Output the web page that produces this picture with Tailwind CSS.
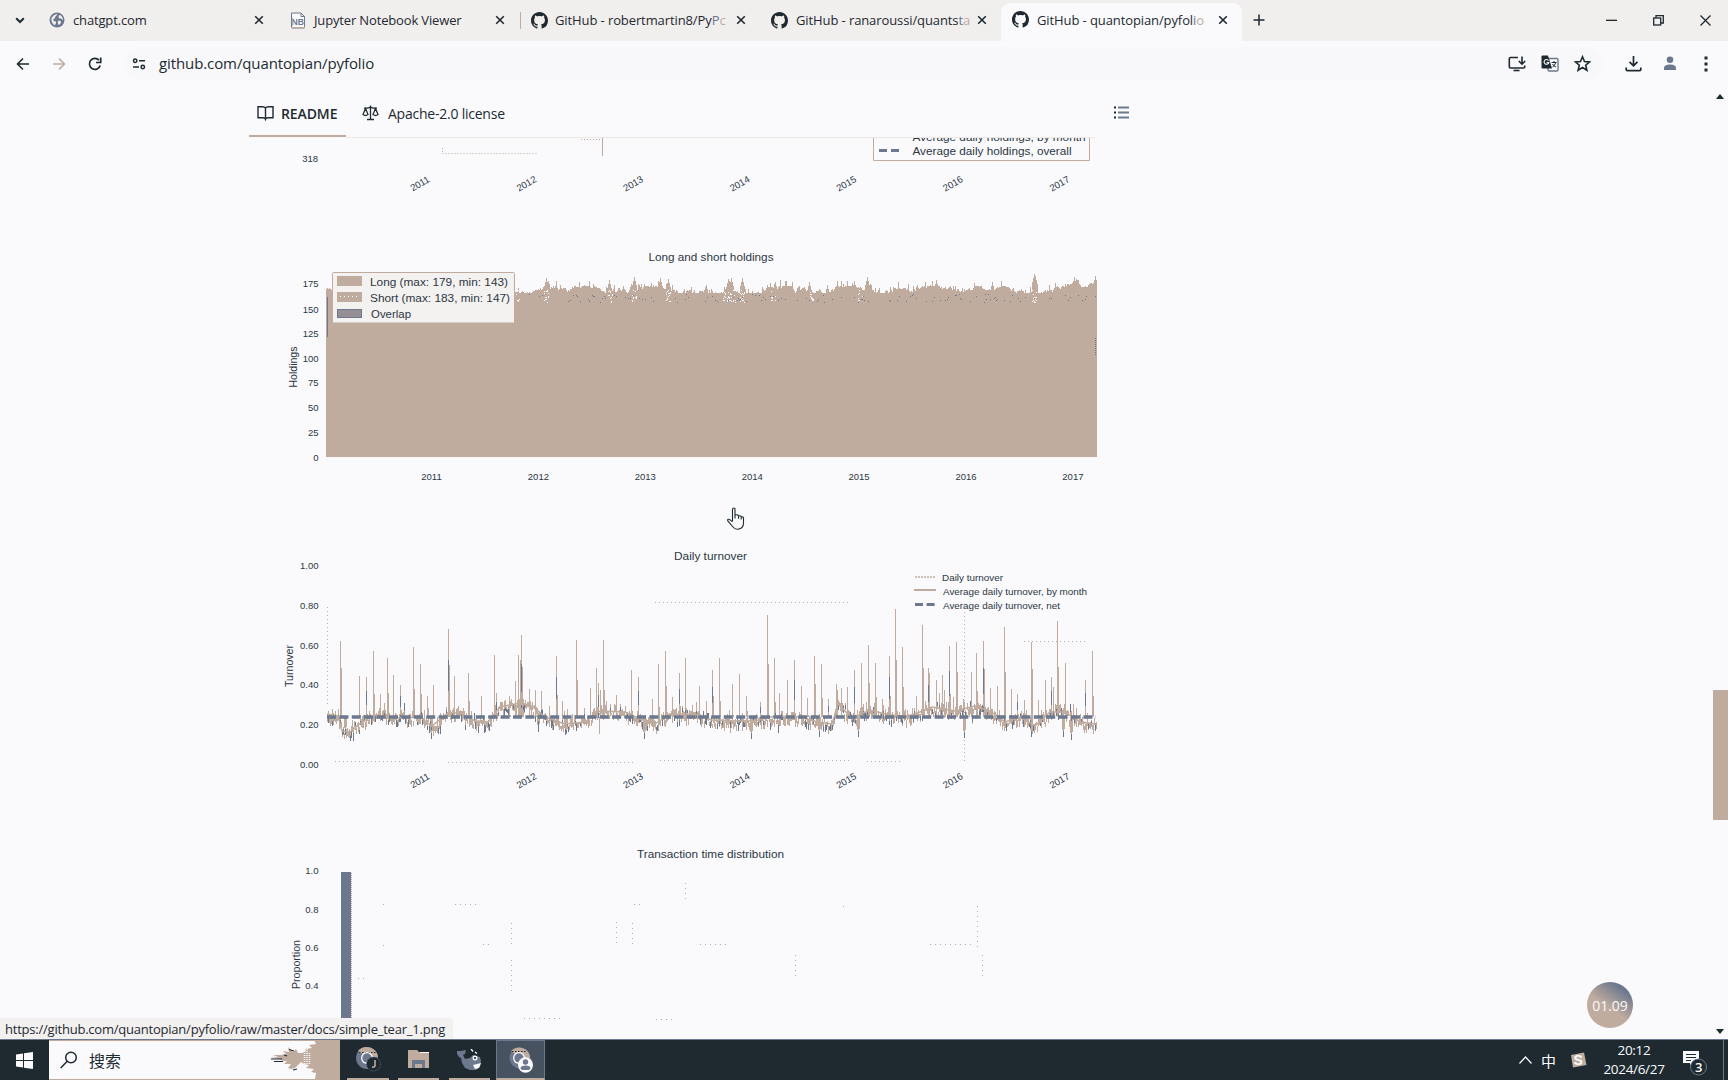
<!DOCTYPE html>
<html lang="en">
<head>
<meta charset="utf-8">
<title>GitHub - quantopian/pyfolio</title>
<script src="https://cdn.jsdelivr.net/npm/@tailwindcss/browser@4"></script>
</head>
<body class="w-[1728px] h-[1080px] overflow-hidden flex flex-col bg-[#fafafd] text-[#1e2a30] font-['Open_Sans','Noto_Sans_CJK_SC',sans-serif]">
<svg class="hidden">
  <symbol id="gh" viewBox="0 0 16 16"><path fill="#1e2a30" d="M8 0C3.58 0 0 3.58 0 8c0 3.54 2.29 6.53 5.47 7.59.4.07.55-.17.55-.38 0-.19-.01-.82-.01-1.49-2.01.37-2.53-.49-2.69-.94-.09-.23-.48-.94-.82-1.13-.28-.15-.68-.52-.01-.53.63-.01 1.08.58 1.23.82.72 1.21 1.87.87 2.33.66.07-.52.28-.87.51-1.07-1.78-.2-3.64-.89-3.64-3.95 0-.87.31-1.59.82-2.15-.08-.2-.36-1.02.08-2.12 0 0 .67-.21 2.2.82.64-.18 1.32-.27 2-.27s1.36.09 2 .27c1.53-1.04 2.2-.82 2.2-.82.44 1.1.16 1.92.08 2.12.51.56.82 1.27.82 2.15 0 3.07-1.87 3.75-3.65 3.95.29.25.54.73.54 1.48 0 1.07-.01 1.93-.01 2.2 0 .21.15.46.55.38A8.01 8.01 0 0 0 16 8c0-4.42-3.58-8-8-8z"/></symbol>
  <symbol id="x" viewBox="0 0 10 10"><path d="M1.2 1.2l7.6 7.6M8.8 1.2L1.2 8.8" stroke="#1e2a30" stroke-width="1.6" fill="none"/></symbol>
</svg>

<!-- tab strip -->
<header class="h-[41px] shrink-0 flex bg-[#f1eeee] text-[13px] pt-[3px]">
  <div class="w-[37px] flex items-center h-[34px] pl-[15px]"><svg width="10" height="7" viewBox="0 0 10 7" fill="none" stroke="#1e2a30" stroke-width="2"><path d="M1.2 1.2L5 5l3.800-3.800"/></svg></div>
  <div class="w-[241px] flex items-center h-[34px] pl-[12px]">
    <svg class="shrink-0" width="16" height="16" viewBox="0 0 16 16"><circle cx="8" cy="8" r="7.500" fill="#6c788e"/><path fill="#f1eeee" d="M2.500 6c2-3 4-4 6-4-1 1-1 2-2 2.500s0 1.500-1 2S4 7 4.500 8.500s2 0 2.500 1.500-1 2-1 3.500C3 12 2 9 2.500 6zM10 3c2 0 4 2 4 5-1 0-1-1.500-2.200-1.500S9.500 6 9.500 5 10.500 4 10 3zM9 9c1.500-.5 3 0 3 1s-1 2.500-2.500 3c-.5-1.500-1-2.500-.5-4z"/></svg>
    <span class="ml-[8px] w-[181px] pt-[2px] whitespace-nowrap tracking-[-0.15px]">chatgpt.com</span>
    <svg class="shrink-0" width="10" height="10"><use href="#x"/></svg>
  </div>
  <div class="w-[241px] flex items-center h-[34px] pl-[12px]">
    <svg class="shrink-0" width="16" height="17" viewBox="0 0 16 17"><path d="M1.500 1h9.500l3.500 3.500V16h-13z" fill="#fafafd" stroke="#6c788e"/><path d="M11 1v3.500h3.500" stroke="#6c788e" fill="none"/><text x="1.500" y="13" font-size="9.500" font-weight="700" fill="#6c788e" font-family="Liberation Sans" textLength="12.500" lengthAdjust="spacingAndGlyphs">NB</text><path d="M1 15.500h14M2.500 6v8" stroke="#bfac9e"/></svg>
    <span class="ml-[8px] w-[181px] pt-[2px] whitespace-nowrap tracking-[-0.15px]">Jupyter Notebook Viewer</span>
    <svg class="shrink-0" width="10" height="10"><use href="#x"/></svg>
  </div>
  <div class="w-[241px] flex items-center h-[34px]">
    <span class="w-px h-[17px] bg-[#bfac9e] ml-[1px]"></span>
    <svg class="shrink-0 ml-[10px]" width="17" height="17"><use href="#gh"/></svg>
    <span class="ml-[7px] w-[181px] pt-[2px] whitespace-nowrap tracking-[-0.1px]">GitHub - robertmartin8/Py<span class="text-[#6c788e]">P</span><span class="text-[#bfac9e]">c</span></span>
    <svg class="shrink-0" width="10" height="10"><use href="#x"/></svg>
  </div>
  <div class="w-[241px] flex items-center h-[34px] pl-[11px]">
    <svg class="shrink-0" width="17" height="17"><use href="#gh"/></svg>
    <span class="ml-[8px] w-[181px] pt-[2px] whitespace-nowrap tracking-[-0.1px]">GitHub - ranaroussi/quants<span class="text-[#6c788e]">t</span><span class="text-[#bfac9e]">a</span></span>
    <svg class="shrink-0" width="10" height="10"><use href="#x"/></svg>
  </div>
  <div class="w-[241px] flex items-start h-[38px] pl-[11px] bg-[#fafafd] rounded-t-[9px]">
    <svg class="shrink-0 mt-[8px]" width="17" height="17"><use href="#gh"/></svg>
    <span class="ml-[8px] mt-[8px] w-[181px] whitespace-nowrap tracking-[-0.1px]">GitHub - quantopian/pyfol<span class="text-[#6c788e]">i</span><span class="text-[#bfac9e]">o</span></span>
    <svg class="shrink-0 mt-[12px]" width="10" height="10"><use href="#x"/></svg>
  </div>
  <div class="flex items-center h-[34px] pl-[11px]"><svg width="12" height="12"><path d="M6 .5v11M.5 6h11" stroke="#1e2a30" stroke-width="1.500"/></svg></div>
  <div class="flex-1 flex items-center justify-end h-[34px] pr-[17px] gap-[36px]">
    <svg width="11" height="11"><path d="M0 5.500h11" stroke="#1e2a30"/><path d="M0 4.500h11" stroke="#bfac9e"/></svg>
    <svg width="11" height="11" fill="none" stroke="#1e2a30" stroke-width="1.300"><rect x=".7" y="3" width="7" height="7"/><path d="M3 3V.7h7.300V8H8"/></svg>
    <svg width="11" height="11"><path d="M.5 .5l10 10M10.500 .5l-10 10" stroke="#1e2a30" stroke-width="1.300"/></svg>
  </div>
</header>

<!-- address row -->
<div class="h-[45px] shrink-0 flex items-center pl-[16px]">
  <svg width="13" height="14" viewBox="0 0 13 14" fill="none" stroke="#1e2a30" stroke-width="1.600"><path d="M13 7H1.500M7 1.500L1.500 7 7 12.500"/></svg>
  <svg class="ml-[24px]" width="13" height="14" viewBox="0 0 13 14" fill="none" stroke="#bfac9e" stroke-width="1.600"><path d="M0 7h11.500M6 1.500L11.500 7 6 12.500"/></svg>
  <svg class="ml-[22px]" width="14" height="14" viewBox="0 0 14 14" fill="none" stroke="#1e2a30" stroke-width="1.700"><path d="M12.200 8.500A5.500 5.500 0 1 1 11 3.200"/><path d="M12.700 .5v5H8" /></svg>
  <div class="ml-[22px] w-[1478px] h-[34px] rounded-full bg-[#f8f8fa] flex items-center pl-[8px]">
    <svg width="14" height="12" viewBox="0 0 14 12" fill="none" stroke="#1e2a30" stroke-width="1.500"><circle cx="3.200" cy="2.800" r="1.700"/><path d="M7 2.800h6M1 9h6"/><circle cx="10.800" cy="9" r="1.700"/></svg>
    <span class="ml-[13px] text-[15px] tracking-[-0.1px]">github.com/quantopian/pyfolio</span>
    <div class="ml-auto flex items-center gap-[15px] pr-[11px]">
      <svg width="18" height="16" viewBox="0 0 18 16" fill="none" stroke="#1e2a30" stroke-width="1.600"><path d="M10 1.500H2.500Q1.300 1.500 1.300 2.500v8.500q0 1 1.200 1h13q1.200 0 1.200-1v-1.500"/><path d="M5.500 14.500h6"/><path d="M14 .5v7.500M10.800 5L14 8.200 17.200 5"/></svg>
      <svg width="18" height="17" viewBox="0 0 18 17"><rect x="7" y="3.500" width="10" height="12.500" rx="1.200" fill="#fafafd" stroke="#6c788e" stroke-width="1.400"/><path d="M0.500 1.500Q.5.500 1.500.5H7l4 13H1.500q-1 0-1-1z" fill="#1e2a30"/><path d="M7.500 5.600A2.400 2.400 0 1 0 7.800 7.500H5.600" fill="none" stroke="#fafafd" stroke-width="1.100"/><path d="M10.500 7.500h5M13 6v1.500M14.800 7.500q-.8 3-3.300 4.500M11.500 9q1 2 3.500 3" fill="none" stroke="#1e2a30"/></svg>
      <svg width="17" height="17" viewBox="0 0 17 17"><path d="M8.500 1.800l2 4.700 5 .4-3.800 3.300 1.200 5-4.400-2.700-4.400 2.700 1.200-5L1.500 6.900l5-.4z" fill="none" stroke="#1e2a30" stroke-width="1.600"/></svg>
    </div>
  </div>
  <svg class="ml-[23px]" width="17" height="17" viewBox="0 0 17 17" fill="none" stroke="#1e2a30" stroke-width="1.700"><path d="M8.500 1v9.500M4.500 6.800l4 4 4-4M1.200 12.500v2q0 1.200 1.200 1.200h12.200q1.200 0 1.200-1.200v-2"/></svg>
  <svg class="ml-[21px]" width="14" height="15" viewBox="0 0 14 15" fill="#6c788e"><circle cx="7" cy="3.700" r="3.300"/><path d="M1 14v-2q0-3.500 6-3.500t6 3.500v2z"/></svg>
  <svg class="ml-[27px]" width="4" height="16" fill="#1e2a30"><rect width="3" height="3" y="0.500" x=".5"/><rect width="3" height="3" y="6.500" x=".5"/><rect width="3" height="3" y="12.500" x=".5"/></svg>
</div>

<!-- page -->
<main class="relative flex-1 min-h-0 flex">
  <div class="ml-[249px] w-[892px] h-full overflow-hidden">
    <div class="h-[52px] flex text-[14px]">
      <div class="w-[97px] h-[51px] border-b-2 border-[#bfac9e] flex items-center pt-[4px] pl-[8px]">
        <svg class="shrink-0" width="17" height="16" viewBox="0 0 17 16" fill="none" stroke="#1e2a30" stroke-width="1.400"><path d="M8.500 3.200Q7.500 1.800 5.500 1.800H1v11h5q2 0 2.500 1.500.5-1.500 2.500-1.500h5v-11h-4.500q-2 0-3 1.400v11"/></svg>
        <span class="ml-[7px] pt-px font-semibold text-[14px] tracking-[-0.1px]">README</span>
      </div>
      <div class="flex items-center pt-[2px] pl-[16px] border-b border-[#ece7e3] w-[749px]">
        <svg width="17" height="16" viewBox="0 0 17 16" fill="none" stroke="#1e2a30" stroke-width="1.300"><path d="M8.500 .5v14M5 14.500h7M2 3.200h3q1.500 0 3.500-1 2 1 3.500 1h3M3.500 3.500L1 9.500q2.500 2 5 0zM13.500 3.500L11 9.500q2.500 2 5 0z"/></svg>
        <span class="ml-[9px] pt-px text-[14px] tracking-[-0.23px]">Apache-2.0 license</span>
        <svg class="ml-auto mr-[-34px]" width="15" height="13" viewBox="0 0 15 13"><path d="M4 1.500h11M4 6.500h11M4 11.500h11" stroke="#6c788e" stroke-width="2"/><path d="M0 1.500h2M0 6.500h2M0 11.500h2" stroke="#1e2a30" stroke-width="2"/></svg>
      </div>
    </div>

    <div class="flex flex-col font-['Liberation_Sans',sans-serif]">
      <!-- daily holdings, lower edge -->
      <svg class="block" width="868" height="92" viewBox="249 138 868 92" fill="#2c3742" font-size="9.500">
        <text x="318" y="161.500" text-anchor="end">318</text>
        <g class="years-tilted" data-y="183"></g>
        <path d="M442.500 153.500h95M442.500 148v5" stroke="#bfac9e" stroke-dasharray="1 2" fill="none"/>
        <path d="M602.500 138v18" stroke="#bfac9e"/><path d="M581 139.500h20" stroke="#bfac9e" stroke-dasharray="1 2"/>
        <path d="M873.500 138v22.500h216V138" fill="none" stroke="#bfac9e"/>
        <path d="M879 150.500h20" stroke="#6c788e" stroke-width="3" stroke-dasharray="8 4"/>
        <text x="912.500" y="140.500" font-size="10" textLength="173" lengthAdjust="spacingAndGlyphs">Average daily holdings, by month</text>
        <text x="912.500" y="154.500" font-size="10" textLength="159" lengthAdjust="spacingAndGlyphs">Average daily holdings, overall</text>
      </svg>
      <!-- long and short holdings -->
      <svg class="block" width="868" height="300" viewBox="249 230 868 300" fill="#2c3742" font-size="9.500">
        <text x="648.500" y="261" font-size="11" textLength="125" lengthAdjust="spacingAndGlyphs">Long and short holdings</text>
        <g class="ylab" data-l="175:283 150:309 125:333.5 100:358 75:382.5 50:407.5 25:432 0:457"></g>
        <text transform="translate(297 367) rotate(-90)" text-anchor="middle" font-size="10.500" textLength="41" lengthAdjust="spacingAndGlyphs">Holdings</text>
        <path id="area" fill="#bfac9e"/>
        <path id="specks" stroke="#6c788e" fill="none"/>
        <path id="holes" stroke="#fafafd" fill="none"/>
        <path d="M327.500 297v40" stroke="#6c788e"/>
        <path d="M1095.500 338v18" stroke="#6c788e" stroke-dasharray="1 1"/>
        <rect x="332.500" y="272.500" width="182" height="50.500" rx="1" fill="#f4f1f1" stroke="#bfac9e"/>
        <rect x="337" y="276" width="25" height="10" fill="#bfac9e"/>
        <rect x="337" y="292" width="25" height="10" fill="#bfac9e"/><path d="M340 296.500h18" stroke="#fafafd" stroke-dasharray="1 3"/>
        <rect x="337.500" y="309.500" width="24" height="8" fill="#958f94" stroke="#6c788e"/>
        <text x="370" y="286" font-size="10.500" textLength="138" lengthAdjust="spacingAndGlyphs">Long (max: 179, min: 143)</text>
        <text x="370" y="301.500" font-size="10.500" textLength="140" lengthAdjust="spacingAndGlyphs">Short (max: 183, min: 147)</text>
        <text x="371" y="318" font-size="10.500" textLength="40" lengthAdjust="spacingAndGlyphs">Overlap</text>
        <g class="years" data-y="480"></g>
      </svg>
      <!-- daily turnover -->
      <svg class="block" width="868" height="300" viewBox="249 530 868 300" fill="#2c3742" font-size="9.500">
        <text x="674" y="560" font-size="11" textLength="73" lengthAdjust="spacingAndGlyphs">Daily turnover</text>
        <g class="ylab" data-l="1.00:565 0.80:605.5 0.60:645 0.40:684.5 0.20:724.5 0.00:764"></g>
        <text transform="translate(293 666) rotate(-90)" text-anchor="middle" font-size="10.500" textLength="42" lengthAdjust="spacingAndGlyphs">Turnover</text>
        <path d="M655 602.500h196M335 761.500h92M448 762.500h186M660 760.500h190M867 761.500h34M327.500 607v100M964.500 612v150M1024 641.500h63" stroke="#bfac9e" stroke-dasharray="1 3" fill="none"/>
        <path id="turn" stroke="#bfac9e" stroke-width="1" fill="none"/>
        <path id="turn2" stroke="#6c788e" stroke-width="1" fill="none"/>
        <path id="month" stroke="#bfac9e" stroke-width="1.500" fill="none"/>
        <path d="M327 717h769" stroke="#6c788e" stroke-width="3.600" stroke-dasharray="9 3.400"/>
        <path d="M915 577h20" stroke="#bfac9e" stroke-width="1.500" stroke-dasharray="2 1"/>
        <path d="M914 590h22" stroke="#bfac9e" stroke-width="2"/>
        <path d="M915 604.500h20" stroke="#6c788e" stroke-width="3" stroke-dasharray="8 3.600"/>
        <text x="942" y="581" font-size="9.500" textLength="61" lengthAdjust="spacingAndGlyphs">Daily turnover</text>
        <text x="943" y="595" font-size="9.500" textLength="144" lengthAdjust="spacingAndGlyphs">Average daily turnover, by month</text>
        <text x="943" y="608.500" font-size="9.500" textLength="117" lengthAdjust="spacingAndGlyphs">Average daily turnover, net</text>
        <g class="years-tilted" data-y="780"></g>
      </svg>
      <!-- transaction time distribution -->
      <svg class="block" width="868" height="209" viewBox="249 830 868 209" fill="#2c3742" font-size="9.500">
        <text x="637" y="858" font-size="11" textLength="147" lengthAdjust="spacingAndGlyphs">Transaction time distribution</text>
        <g class="ylab" data-l="1.0:870.5 0.8:909 0.6:947.5 0.4:985.5"></g>
        <text transform="translate(300 964.500) rotate(-90)" text-anchor="middle" font-size="10.500" textLength="49" lengthAdjust="spacingAndGlyphs">Proportion</text>
        <rect x="341" y="872" width="10" height="146" fill="#6c788e"/><path d="M351.500 873v145" stroke="#bfac9e" stroke-dasharray="1 1"/>
        <path d="M455 904.500h24M511.500 923v22M511.500 960v34M616.500 922v22M632.500 923v22M685.500 883v20M483 944.500h8M700 944.500h30M977.500 906v42M982.500 955v25M930 944.500h45M795.500 955v25M524 1018.500h38M656 1019.500h20M634 904.500h8M358 978.500h10M843.500 906v4M383.500 904v2M383.500 945v2" stroke="#bfac9e" stroke-dasharray="1 4" fill="none"/>
      </svg>
    </div>
  </div>

  <!-- scrollbar -->
  <div class="ml-auto w-[16px] h-full flex flex-col items-center">
    <svg class="mt-[8px] shrink-0" width="8" height="5"><path d="M4 0l4 5H0z" fill="#1e2a30"/></svg>
    <div class="mt-[591px] w-[15px] h-[130px] bg-[#bfac9e] shrink-0"></div>
    <svg class="mt-auto mb-[5px] shrink-0" width="8" height="5"><path d="M4 5l4-5H0z" fill="#1e2a30"/></svg>
  </div>

  <!-- link status -->
  <div class="absolute left-0 bottom-0 w-[453px] h-[21px] bg-[#f3f0f0] rounded-tr-[4px] pl-[5px] pt-[3px] flex items-center text-[13px] whitespace-nowrap tracking-[-0.22px]"><span>https://github.com/quantopian/pyfolio/raw/master/docs/simple_tear_1.png</span></div>

  <!-- recorder bubble -->
  <div class="absolute left-[1587px] top-[896px] w-[46px] h-[46px] rounded-full bg-[linear-gradient(215deg,#6c788e_18%,#bfac9e_55%)] flex items-center justify-center text-[14px] text-[#fafafd]">01.09</div>

  <!-- pointer -->
  <svg class="absolute left-[726px] top-[421px]" width="19" height="24" viewBox="0 0 19 24"><path d="M6.500 14V2.500q0-1.500 1.300-1.500T9 2.500V8q3-.8 3.500.8 2.200-.4 2.700 1 2.300-.4 2.300 1.200v5q0 5.500-5.500 6.200-3 0-4.500-1.700L2 14.200q-1-1.700.5-2 1.500-.2 4 2.800M9 8v3.500M12.500 8.800v3M15.200 9.800v2.700" fill="#fafafd" stroke="#1e2a30" stroke-width="1.100"/></svg>
</main>

<!-- taskbar -->
<footer class="h-[41px] shrink-0 bg-[#1e2a30] border-t border-[#6c788e] flex text-[#fafafd]">
  <div class="w-[49px] flex items-center justify-center"><svg width="17" height="17" viewBox="0 0 17 17" fill="#fafafd"><path d="M0 2.500l7-1v6.500H0zM8 1.300L17 0v8H8zM0 9h7v6.500l-7-1zM8 9h9v8l-9-1.300z"/></svg></div>
  <div class="w-[291px] h-[40px] bg-[#fafafd] border-y border-[#bfac9e] text-[#1e2a30] flex items-center pl-[11px]">
    <svg width="18" height="18" viewBox="0 0 18 18" fill="none" stroke="#1e2a30" stroke-width="1.500"><circle cx="11" cy="6.500" r="5.300"/><path d="M7.200 10.300L.7 17"/></svg>
    <span class="ml-[11px] text-[16px] font-['Noto_Sans_CJK_SC',sans-serif]">搜索</span>
    <svg class="ml-auto" width="71" height="38" viewBox="269 1041 71 38"><path fill="#bfac9e" d="M340 1041v38h-25l1-6-5-1 3-3-8-1 3-3-5-1-3-2-3 3-3 3-4 1-3-1 3-4-7 0 3-3h-4l-3-2-10-1 8-1-5-2h8l5-1-3-3 6 1-1-5 5 5 3-3 2 4h4l4-2-1-2 7-1-3-3 7-1-2-4 5-1-1-3z"/><path d="M271 1059h11M274 1061.500h9M289 1049.500l5 1.500M293 1070l4-1M284 1055l3 1" stroke="#1e2a30" stroke-width="1.200"/><path d="M304.500 1051v17M307 1049v18M309.500 1053v12" stroke="#fafafd" stroke-dasharray="1 1" stroke-width="1.500"/></svg>
  </div>
  <div class="flex pl-[7px]">
    <div class="w-[42px] flex flex-col justify-end items-center border-b-2 border-[#bfac9e]">
      <svg class="mb-[6px]" width="26" height="26" viewBox="0 0 26 26"><circle cx="12" cy="12" r="11" fill="#6c788e"/><path d="M3 5A11.500 11.500 0 0 1 23 11H12z" fill="#bfac9e"/><path d="M4 6.500h17" stroke="#1e2a30" stroke-dasharray="1.500 1.500"/><circle cx="12" cy="12" r="6" fill="#fafafd"/><circle cx="12" cy="12" r="4.700" fill="#6c788e"/><circle cx="18.500" cy="18" r="7" fill="#1e2a30" stroke="#6c788e" stroke-width=".8" stroke-dasharray="1 1"/><path d="M20 14v5.500q0 2-3 1.500" stroke="#bfac9e" stroke-width="1.600" fill="none"/></svg>
    </div>
    <div class="ml-[9px] w-[41px] flex flex-col justify-end items-center border-b-2 border-[#bfac9e]">
      <svg class="mb-[9px]" width="21" height="19" viewBox="0 0 21 19"><path d="M0 0h9l2 2h10v16H0z" fill="#bfac9e"/><path d="M12 2.500h9" stroke="#fafafd"/><path d="M4 18v-8h13v8h-3v-4H7v4z" fill="#6c788e"/></svg>
    </div>
    <div class="ml-[10px] w-[41px] flex flex-col justify-end items-center border-b-2 border-[#bfac9e]">
      <svg class="mb-[7px]" width="26" height="22" viewBox="0 0 26 22"><path d="M0 2l4 0 5-1-1 4-2 1 2 4 5-1 3-3 7 2 1 4-1 6-4 3h-6l-5-2-3-5-1-5-2-1-2-3z" fill="#6c788e"/><path d="M16 16l8-2-2 5-4 1z" fill="#fafafd"/><circle cx="18" cy="9" r="2.500" fill="#fafafd"/><circle cx="18" cy="9" r="1.100" fill="#1e2a30"/><path d="M14 0l2 2.500M18 3l2 1.500" stroke="#fafafd" stroke-width="1.300"/></svg>
    </div>
    <div class="ml-[6px] w-[49px] bg-[#46525f] border border-b-2 border-[#6c788e] border-b-[#bfac9e] flex flex-col justify-end items-center">
      <svg class="mb-[5px]" width="26" height="27" viewBox="0 0 26 27"><circle cx="12" cy="12" r="10.500" fill="#6c788e"/><path d="M3 5A11 11 0 0 1 22 12l-8 2z" fill="#bfac9e"/><path d="M4 5.500h15" stroke="#1e2a30" stroke-dasharray="1.500 1.500"/><circle cx="11" cy="12" r="6" fill="#fafafd"/><circle cx="11" cy="12" r="4.700" fill="#6c788e"/><ellipse cx="17.500" cy="19" rx="7.500" ry="7.700" fill="#fafafd"/><circle cx="17.500" cy="16" r="2.700" fill="#6c788e"/><path d="M12.500 22.500q0-3 5-3t5 3l-1.500 1.500h-7z" fill="#6c788e"/></svg>
    </div>
  </div>
  <div class="ml-auto flex items-center">
    <svg width="13" height="8" fill="none" stroke="#fafafd" stroke-width="1.200"><path d="M.5 7.500l6-6.500 6 6.500"/></svg>
    <span class="ml-[9px] text-[15px] leading-none font-['Noto_Sans_CJK_SC',sans-serif]">中</span>
    <svg class="ml-[14px]" width="17" height="16" viewBox="0 0 17 16"><path d="M1 3l13-2.500L16.500 13 3 15.500z" fill="#bfac9e"/><text x="3.500" y="13" font-size="14" font-weight="700" fill="#fafafd" font-family="Liberation Sans">S</text></svg>
    <div class="ml-[13px] w-[68px] text-center text-[13.5px] leading-[19px] tracking-[-0.3px]">20:12<br>2024/6/27</div>
    <div class="ml-[15px] relative w-[40px] h-[40px]">
      <svg class="absolute left-0 top-0" width="30" height="40" viewBox="0 0 30 40"><path d="M0 11h16v12H9l-2 3v-3H0z" fill="#fafafd"/><path d="M3 14.500h10M3 17.500h10M3 20.500h5" stroke="#1e2a30"/><circle cx="15.500" cy="27" r="8" fill="#1e2a30" stroke="#6c788e"/></svg>
      <span class="absolute left-[12px] top-[18px] text-[13px] leading-[18px] font-semibold">3</span>
    </div>
    <div class="w-[5px] h-[40px] border-l border-[#6c788e]"></div>
  </div>
</footer>

<script>
const NS = 'http://www.w3.org/2000/svg';
const YEARS = [2011, 2012, 2013, 2014, 2015, 2016, 2017];
function label(g, x, y, t, a, tr) {
  const e = document.createElementNS(NS, 'text');
  e.textContent = t; e.setAttribute('text-anchor', a);
  if (tr) e.setAttribute('transform', tr); else { e.setAttribute('x', x); e.setAttribute('y', y); }
  g.appendChild(e);
}
document.querySelectorAll('.ylab').forEach(g => g.dataset.l.split(' ').forEach(p => { const [t, y] = p.split(':'); label(g, 318.5, +y + 3.5, t, 'end'); }));
document.querySelectorAll('.years').forEach(g => YEARS.forEach((t, i) => label(g, 431.5 + i * 106.9, g.dataset.y, t, 'middle')));
document.querySelectorAll('.years-tilted').forEach(g => YEARS.forEach((t, i) => label(g, 0, 0, t, 'middle', `translate(${421.5 + i * 106.6} ${+g.dataset.y + 3.5}) rotate(-30)`)));

let s = 7;
const rnd = () => (s = (s * 16807) % 2147483647) / 2147483647;

// holdings area
const peaks = { 546: 278, 548: 281, 609: 280, 634: 277, 644: 284, 660: 278, 668: 279, 706: 285, 728: 279, 731: 278, 742: 278, 770: 283, 775: 282, 786: 287, 809: 282, 827: 285, 854: 281, 867: 277, 936: 280, 992: 282, 1034: 274, 1035: 276, 1074: 280, 1095: 279 };
let d = 'M326 457', sp = '', ho = '', y = 291;
for (let x = 326; x < 1097; x++) {
  y += (rnd() - .5) * 4; y = Math.max(286, Math.min(293, y));
  let v = y - (rnd() < .2 ? rnd() * 6 : 0);
  for (const p in peaks) { const k = Math.abs(x - p); if (k < 3) v = Math.min(v, peaks[p] + k * 4); }
  if (x > 1052) v -= 3;
  d += `V${v.toFixed(0)}H${x + 1}`;
  if (x > 515 && rnd() < .25) sp += `M${x} ${Math.round(294 + rnd() * 8)}.5h1`;
  for (const p of [518, 546, 610, 634, 668, 729, 742, 773, 811, 860, 1034]) if (Math.abs(x - p) < (p == 729 ? 7 : 3) && rnd() < .8) for (let q = 0; q < 3; q++) ho += `M${x} ${Math.round(290 + rnd() * 12)}.5h1`;
}
area.setAttribute('d', d + 'V457z'); specks.setAttribute('d', sp); holes.setAttribute('d', ho);

// turnover spikes: x, y top
const L = [[210,303],[268,408],[290,410],[311,332],[331,462],[351,353],[371,405],[391,435],[431,320],[451,372],[472,468],[490,436],[534,268],[552,408],[594,400],[635,468],[673,345],[678,460],[718,468],[735,423],[745,345],[750,360],[754,285],[757,380],[777,448],[796,450],[815,452],[859,348],[877,484],[918,300],[960,445],[980,384],[985,430],[992,450],[999,300],[1040,465],[1083,390],[1104,412],[1147,478],[1165,372],[1187,333],[1208,472],[1227,400],[1246,353],[1288,440]].map(p => [p[0] / 3 + 270, p[1] / 3 + 540]);
const R = [[28,588],[48,632],[68,541],[88,505],[127,583],[148,552],[169,618],[211,636],[232,376],[253,505],[268,610],[292,570],[312,511],[334,588],[353,625],[373,498],[394,522],[414,628],[438,583],[442,600],[453,595],[473,592],[493,541],[515,518],[535,465],[556,518],[577,628],[597,498],[617,358],[638,472],[680,618],[698,405],[714,535],[719,550],[739,570],[757,555],[763,600],[778,468],[798,457],[820,628],[843,546],[860,490],[881,453],[900,595],[922,588],[942,410],[965,598],[983,612],[1003,630],[1023,457],[1045,630],[1065,570],[1083,560],[1091,590],[1102,393],[1125,520],[1150,642],[1187,570],[1207,484]].map(p => [p[0] / 3 + 690, p[1] / 3 + 490]);
const dips = [[345,735],[431,739],[538,732],[565,735],[644,739],[751,739],[819,737],[858,737],[964,738],[1031,737],[1063,737],[1071,740]];
const mean = [[327,714],[338,716],[342,731],[350,732],[362,722],[375,715],[400,718],[420,717],[432,726],[448,713],[460,713],[475,721],[488,722],[500,707],[520,703],[532,706],[545,717],[565,724],[585,722],[600,711],[625,712],[640,719],[655,724],[670,714],[695,714],[712,720],[735,721],[755,721],[775,716],[800,717],[818,722],[832,724],[838,704],[852,718],[870,710],[885,714],[905,717],[920,712],[932,707],[955,711],[975,706],[990,711],[1005,722],[1020,717],[1035,726],[1050,712],[1065,712],[1080,722],[1096,724]];
function base(x) { let i = 0; while (i < mean.length - 2 && mean[i + 1][0] < x) i++; const [a, b] = mean[i], [c, e] = mean[i + 1]; return b + (e - b) * (x - a) / (c - a); }
let t1 = '', t2 = '';
for (let x = 327; x < 1097; x++) {
  const m = base(x), c = m + 2 + (rnd() - .5) * 9, up = c - 1 - rnd() * 5 - (rnd() < .1 ? rnd() * 12 : 0), dn = c + 1 + rnd() * 5;
  t1 += `M${x}.5 ${up.toFixed(0)}V${dn.toFixed(0)}`;
  if (rnd() < .3) { const a = up + rnd() * (dn - up) - 1; t2 += `M${x}.5 ${a.toFixed(0)}v${(3 + rnd() * 5).toFixed(0)}`; }
}
[...L, ...R].forEach(([x, v], i) => {
  const q = Math.round(x - .5) + .5;
  t1 += `M${q} ${v.toFixed(0)}V717` + `M${q + 1} ${(v + 30 * rnd() + 25 < 715 ? v + 30 * rnd() + 25 : 715).toFixed(0)}V717`;
  if (i % 5 == 2) t2 += `M${q} ${(v + (717 - v) * .35).toFixed(0)}V${(v + (717 - v) * .7).toFixed(0)}`;
});
dips.forEach(([x, v]) => { t1 += `M${x - .5} ${v - 7}V717M${x + .5} ${v}V717M${x + 1.5} ${v - 8}V717`; t2 += `M${x + .5} ${v}v-6`; });
turn.setAttribute('d', t1); turn2.setAttribute('d', t2);
month.setAttribute('d', 'M' + mean.map(p => p.join(' ')).join('L'));
</script>
</body>
</html>
